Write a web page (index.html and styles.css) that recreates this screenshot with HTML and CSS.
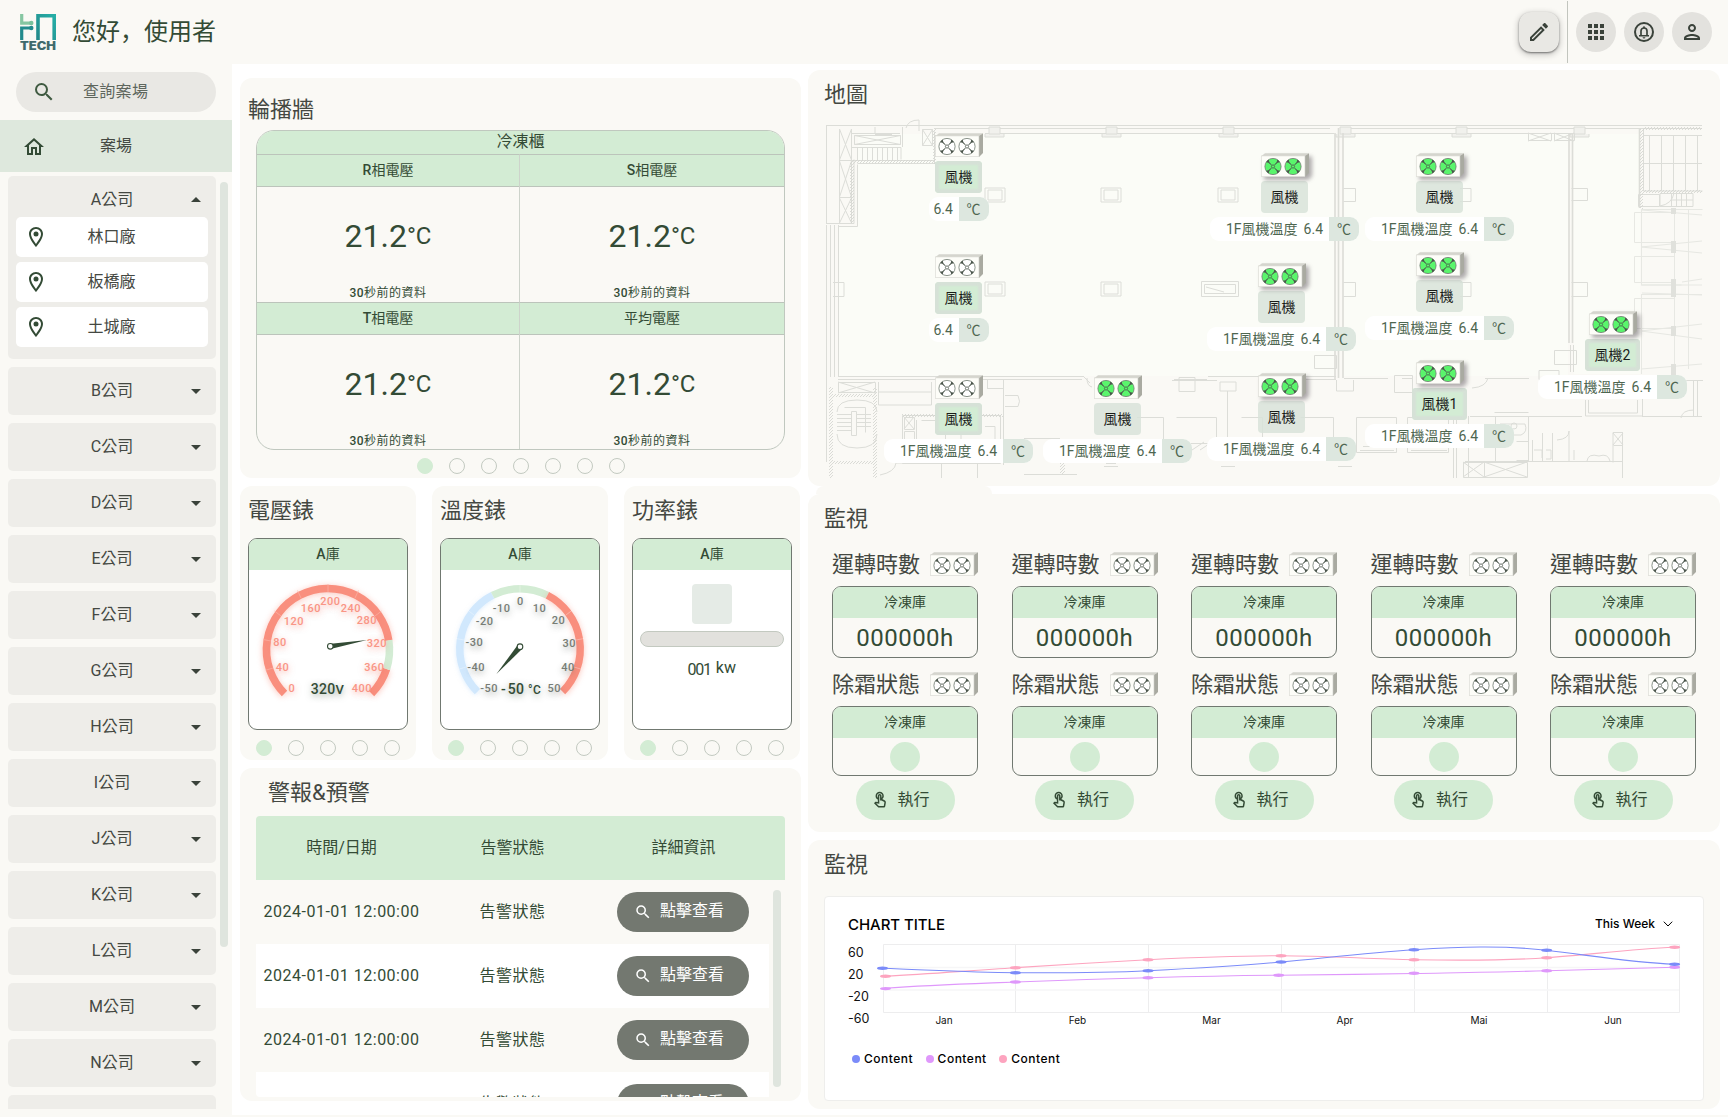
FILE: index.html
```html
<!DOCTYPE html>
<html lang="zh-Hant">
<head>
<meta charset="utf-8">
<title>TECH</title>
<link rel="stylesheet" href="styles.css">
</head>
<body>
<svg class="defs" aria-hidden="true">
  <symbol id="i-search" viewBox="0 0 24 24"><path d="M15.5 14h-.79l-.28-.27A6.471 6.471 0 0 0 16 9.5 6.5 6.5 0 1 0 9.5 16c1.61 0 3.09-.59 4.23-1.57l.27.28v.79l5 4.99L20.49 19l-4.99-5zm-6 0C7.01 14 5 11.99 5 9.5S7.01 5 9.5 5 14 7.01 14 9.5 11.99 14 9.5 14z"/></symbol>
  <symbol id="i-home" viewBox="0 0 24 24"><path d="M12 5.69l5 4.5V18h-2v-6H9v6H7v-7.81l5-4.5M12 3L2 12h3v8h6v-6h2v6h6v-8h3L12 3z"/></symbol>
  <symbol id="i-pin" viewBox="0 0 24 24"><path d="M12 2C8.13 2 5 5.13 5 9c0 5.25 7 13 7 13s7-7.75 7-13c0-3.87-3.13-7-7-7zM7 9c0-2.76 2.24-5 5-5s5 2.24 5 5c0 2.88-2.88 7.19-5 9.88C9.92 16.21 7 11.85 7 9z"/><circle cx="12" cy="9" r="2.5"/></symbol>
  <symbol id="i-down" viewBox="0 0 24 24"><path d="M7 10l5 5 5-5z"/></symbol>
  <symbol id="i-up" viewBox="0 0 24 24"><path d="M7 14l5-5 5 5z"/></symbol>
  <symbol id="i-edit" viewBox="0 0 24 24"><path d="M14.06 9.02l.92.92L5.92 19H5v-.92l9.06-9.06M17.66 3c-.25 0-.51.1-.7.29l-1.83 1.83 3.75 3.75 1.83-1.83c.39-.39.39-1.02 0-1.41l-2.34-2.34c-.2-.2-.45-.29-.71-.29zm-3.6 3.19L3 17.25V21h3.75L17.81 9.94l-3.75-3.75z"/></symbol>
  <symbol id="i-apps" viewBox="0 0 24 24"><path d="M4 8h4V4H4v4zm6 12h4v-4h-4v4zm-6 0h4v-4H4v4zm0-6h4v-4H4v4zm6 0h4v-4h-4v4zm6-10v4h4V4h-4zm-6 4h4V4h-4v4zm6 6h4v-4h-4v4zm0 6h4v-4h-4v4z"/></symbol>
  <symbol id="i-bell" viewBox="0 0 24 24"><circle cx="12" cy="12" r="9" fill="none" stroke="currentColor" stroke-width="2"/><path d="M7 15h10v1.400H7zM10.600 17.200h2.800a1.400 1.400 0 0 1-2.800 0z"/><path d="M9 15.500V11a3 3 0 0 1 6 0v4.500" fill="none" stroke="currentColor" stroke-width="1.700"/><circle cx="12" cy="7.300" r="1"/></symbol>
  <symbol id="i-person" viewBox="0 0 24 24"><path d="M12 6c1.100 0 2 .9 2 2s-.9 2-2 2-2-.9-2-2 .9-2 2-2m0 10c2.700 0 5.800 1.290 6 2H6c.23-.72 3.310-2 6-2m0-12C9.790 4 8 5.790 8 8s1.790 4 4 4 4-1.790 4-4-1.790-4-4-4zm0 10c-2.670 0-8 1.340-8 4v2h16v-2c0-2.660-5.330-4-8-4z"/></symbol>
  <symbol id="i-touch" viewBox="0 0 24 24"><path d="M18.190 12.440l-3.240-1.620c1.290-1 2.120-2.560 2.120-4.320 0-3.030-2.470-5.500-5.500-5.500s-5.500 2.470-5.500 5.500c0 2.130 1.220 3.980 3 4.890v3.260c-2.150-.46-2.020-.44-2.260-.44-.53 0-1.030.21-1.410.59L4 16.220l5.090 5.090c.43.44 1.030.69 1.650.69h6.300c.98 0 1.810-.7 1.970-1.670l.8-4.710c.22-1.300-.43-2.580-1.620-3.180zm-.35 2.850l-.8 4.710h-6.300c-.09 0-.17-.04-.24-.1l-3.680-3.680 4.250.89V6.500c0-.28.22-.5.5-.5s.5.22.5.5v6h1.760l3.460 1.730c.4.2.62.63.55 1.060zM8.070 6.500c0-1.930 1.570-3.500 3.500-3.500s3.500 1.570 3.500 3.500c0 .95-.38 1.810-1 2.440V6.500c0-1.380-1.120-2.500-2.500-2.500s-2.500 1.120-2.500 2.500v2.440c-.62-.63-1-1.490-1-2.440z"/></symbol>
  <symbol id="blades" viewBox="-9 -9 18 18">
    <circle r="8.100" stroke="#6f7a70" stroke-width=".8"/>
    <g fill="#4b564c"><path id="blade" d="M-6.900-4.300A8.100 8.100 0 0 1-4.300-6.900L-3.700-4.600-1.300-1.700-1.700-1.300-4.600-3.700z"/><use href="#blade" transform="rotate(90)"/><use href="#blade" transform="rotate(180)"/><use href="#blade" transform="rotate(270)"/></g>
    <circle r="1.600" stroke="#4a544a" stroke-width=".8"/>
  </symbol>
  <symbol id="fan" viewBox="0 0 48 24">
    <path d="M.5 3L4 .3h44L44 3z" fill="#d5d5ce"/><path d="M44 3l4-2.700V20l-4 4z" fill="#a9aaa1"/>
    <path d="M.3 2.800H44V23.700H.3z" fill="#fdfdf8" stroke="#cfcfc8" stroke-width=".6"/>
    <use href="#blades" x="3" y="4.500" width="18" height="18"/><use href="#blades" x="23" y="4.500" width="18" height="18"/>
  </symbol>
</svg>

<header class="topbar">
  <svg class="logo" viewBox="0 0 36 36">
    <defs><linearGradient id="lg" x1="0" x2="1" y1="1" y2="0"><stop offset="0" stop-color="#22898a"/><stop offset="1" stop-color="#25aea6"/></linearGradient></defs>
    <path d="M1.700 0v9.200H11" fill="none" stroke="#86c6a2" stroke-width="3.200"/><circle cx="11.300" cy="9" r="2.200" fill="#78c19c"/>
    <path d="M1.700 26V14H11" fill="none" stroke="#238b8d" stroke-width="3.200"/><circle cx="11.300" cy="14" r="2.200" fill="#238b8d"/>
    <path d="M18 26V1.800h16.200V26" fill="none" stroke="url(#lg)" stroke-width="3.600"/>
    <text x="0" y="36" textLength="36" lengthAdjust="spacingAndGlyphs" class="logo-text">TECH</text>
  </svg>
  <h1 lang="zh-Hans">您好，使用者</h1>
  <div class="actions">
    <button class="act edit"><svg><use href="#i-edit"/></svg></button>
    <i class="sep"></i>
    <button class="act"><svg><use href="#i-apps"/></svg></button>
    <button class="act"><svg><use href="#i-bell"/></svg></button>
    <button class="act"><svg><use href="#i-person"/></svg></button>
  </div>
</header>

<div class="body">
<aside class="side">
  <div class="search"><svg><use href="#i-search"/></svg><span>查詢案場</span></div>
  <div class="nav"><svg><use href="#i-home"/></svg><span>案場</span></div>
  <div class="side-scroll">
    <div class="companies">
      <section class="co open">
        <div class="co-head"><span>A公司</span><svg><use href="#i-up"/></svg></div>
        <div class="site"><svg><use href="#i-pin"/></svg><span>林口廠</span></div>
        <div class="site"><svg><use href="#i-pin"/></svg><span>板橋廠</span></div>
        <div class="site"><svg><use href="#i-pin"/></svg><span>土城廠</span></div>
      </section>
      <section class="co"><span>B公司</span><svg><use href="#i-down"/></svg></section>
      <section class="co"><span>C公司</span><svg><use href="#i-down"/></svg></section>
      <section class="co"><span>D公司</span><svg><use href="#i-down"/></svg></section>
      <section class="co"><span>E公司</span><svg><use href="#i-down"/></svg></section>
      <section class="co"><span>F公司</span><svg><use href="#i-down"/></svg></section>
      <section class="co"><span>G公司</span><svg><use href="#i-down"/></svg></section>
      <section class="co"><span>H公司</span><svg><use href="#i-down"/></svg></section>
      <section class="co"><span>I公司</span><svg><use href="#i-down"/></svg></section>
      <section class="co"><span>J公司</span><svg><use href="#i-down"/></svg></section>
      <section class="co"><span>K公司</span><svg><use href="#i-down"/></svg></section>
      <section class="co"><span>L公司</span><svg><use href="#i-down"/></svg></section>
      <section class="co"><span>M公司</span><svg><use href="#i-down"/></svg></section>
      <section class="co"><span>N公司</span><svg><use href="#i-down"/></svg></section>
      <section class="co"></section>
    </div>
    <i class="side-bar"></i>
  </div>
</aside>

<main class="main">
<div class="col-left">
  <section class="card wall">
    <h2>輪播牆</h2>
    <div class="wall-table">
      <div class="wall-cap">冷凍櫃</div>
      <div class="wall-grid">
        <div class="cell"><h3><b>R</b>相電壓</h3><p class="val">21.2<sup>°C</sup></p><small><b>30</b>秒前的資料</small></div>
        <div class="cell"><h3><b>S</b>相電壓</h3><p class="val">21.2<sup>°C</sup></p><small><b>30</b>秒前的資料</small></div>
        <div class="cell"><h3><b>T</b>相電壓</h3><p class="val">21.2<sup>°C</sup></p><small><b>30</b>秒前的資料</small></div>
        <div class="cell"><h3>平均電壓</h3><p class="val">21.2<sup>°C</sup></p><small><b>30</b>秒前的資料</small></div>
      </div>
    </div>
    <div class="dots"><i class="on"></i><i></i><i></i><i></i><i></i><i></i><i></i></div>
  </section>

  <div class="meters">
    <section class="card meter">
      <h2>電壓錶</h2>
      <div class="panel"><h3><b>A</b>庫</h3>
        <svg class="gauge" viewBox="249 571 158 158">
          <g fill="none" stroke-width="7.600">
            <path class="glow-red" stroke="#f98f7e" d="M284.500 694.500A61.500 61.500 0 1 1 388.700 641.400M386.500 670A61.500 61.500 0 0 1 371.500 694.500"/>
            <path stroke="#d3ecd4" d="M388.700 641.400A61.500 61.500 0 0 1 386.500 670"/>
            <path stroke="#fbb3a6" stroke-width=".7" d="M273 669l-7.500 2.300M271 642l-8-1.500M281 617l-6.500-5M301 599l-3.500-7.500M328 593v-8M355 599l3.500-7.500M375 617l6.500-5"/>
          </g>
          <g class="lbl red"><text x="292" y="692.500">0</text><text x="282.500" y="671.500">40</text><text x="280" y="646.500">80</text><text x="294" y="625.500">120</text><text x="311" y="612.500">160</text><text x="330.500" y="605.500">200</text><text x="350.800" y="612.500">240</text><text x="366.800" y="624.500">280</text><text x="376.800" y="647.500">320</text><text x="374.500" y="671.500">360</text><text x="362" y="692.500">400</text></g>
          <text class="read" x="327.500" y="694.500">320<tspan font-size="13">V</tspan></text>
          <path fill="#334b35" d="M331 644.800L367 641 331.500 649.800z"/><circle cx="330.300" cy="647.300" r="2.800" fill="#fff" stroke="#334b35" stroke-width="1.100"/>
        </svg>
      </div>
      <div class="dots"><i class="on"></i><i></i><i></i><i></i><i></i></div>
    </section>
    <section class="card meter">
      <h2>溫度錶</h2>
      <div class="panel"><h3><b>A</b>庫</h3>
        <svg class="gauge" viewBox="441 571 158 158">
          <g fill="none" stroke-width="7.400">
            <path stroke="#d1e8fd" class="glow-blue" d="M477.400 692.600A60.300 60.300 0 0 1 492.600 596.300"/>
            <path stroke="#d3ecd4" d="M492.600 596.300A60.300 60.300 0 0 1 547.400 596.300"/>
            <path stroke="#f98f7e" class="glow-red" d="M547.400 596.300A60.300 60.300 0 0 1 562.600 692.600"/>
            <path stroke="#fff" stroke-opacity=".45" stroke-width=".7" d="M466 668l-7.500 2.300M464 641l-8-1.500M474 616l-6.500-5M520 593v-8M566 616l6.500-5M576 641l8-1.500M574 668l7.500 2.300"/>
          </g>
          <g class="lbl"><text x="489.200" y="692.500">-50</text><text x="476.200" y="671.500">-40</text><text x="474.400" y="646.500">-30</text><text x="484.700" y="625.500">-20</text><text x="501.700" y="612.500">-10</text><text x="520.300" y="605.500">0</text><text x="539.500" y="612.500">10</text><text x="558.400" y="624.500">20</text><text x="569.200" y="647.500">30</text><text x="568" y="671.500">40</text><text x="554.300" y="692.500">50</text></g>
          <text class="read" x="521" y="694.500">-&#8202;50 <tspan font-size="12">°C</tspan></text>
          <path fill="#334b35" d="M517.300 646.500L496.400 675 521.500 650.500z"/><circle cx="520" cy="647.700" r="2.800" fill="#fff" stroke="#334b35" stroke-width="1.100"/>
        </svg>
      </div>
      <div class="dots"><i class="on"></i><i></i><i></i><i></i><i></i></div>
    </section>
    <section class="card meter">
      <h2>功率錶</h2>
      <div class="panel"><h3><b>A</b>庫</h3>
        <div class="power"><i class="sq"></i><i class="bar"></i><p><b>001</b><span>kw</span></p></div>
      </div>
      <div class="dots"><i class="on"></i><i></i><i></i><i></i><i></i></div>
    </section>
  </div>

  <section class="card alerts">
    <h2>警報&amp;預警</h2>
    <div class="thead"><span>時間/日期</span><span>告警狀態</span><span>詳細資訊</span></div>
    <div class="tscroll">
      <div class="rows">
        <div class="row"><span>2024-01-01 12:00:00</span><span>告警狀態</span><span><button class="view"><svg><use href="#i-search"/></svg>點擊查看</button></span></div>
        <div class="row"><span>2024-01-01 12:00:00</span><span>告警狀態</span><span><button class="view"><svg><use href="#i-search"/></svg>點擊查看</button></span></div>
        <div class="row"><span>2024-01-01 12:00:00</span><span>告警狀態</span><span><button class="view"><svg><use href="#i-search"/></svg>點擊查看</button></span></div>
        <div class="row"><span>2024-01-01 12:00:00</span><span>告警狀態</span><span><button class="view"><svg><use href="#i-search"/></svg>點擊查看</button></span></div>
      </div>
      <i class="tbar"></i>
    </div>
  </section>
</div>

<div class="col-right">
  <section class="card map">
    <h2>地圖</h2>
    <svg class="plan" viewBox="824 118 880 360" stroke="#dcddd8" stroke-width="1">
      <defs>
        <g id="post"><path d="M0 0h20v14H0zM3 2h14v10H3z"/></g>
        <g id="tpost"><path d="M4 0h11v7H4zM0 7v3h19V7" fill="#f1f1ed"/></g>
        <pattern id="hatch" width="3" height="3" patternUnits="userSpaceOnUse"><path d="M0 3L3 0" stroke="#d2d3ce" stroke-width=".8"/></pattern>
      </defs>
      <path d="M858 164V134h476v242H839V226h19zM1344 134h224v242h-224zM1574 134h66v240h-66z" fill="#fbfcf7" stroke="none"/>
      <path d="M826 125.500h876M934 128.500h396M1344 128.500h358M985 133.500h349M1344 133.500h225M826.500 126v97M826 223.500h28M857.500 164.500v62H838.500M857.500 163.500h77v-32M854 159.500v64M851.500 160.500h83"/>
      <path d="M875 127v6M875 134.500h17M900 133.500h-49M839.500 129v94M851.500 129v94M839.500 160.500h12M839.500 197.500h12M839.500 129l12 31M851.500 129l-12 31M839.500 161l12 36M851.500 161l-12 36M839.500 198l12 25M851.500 198l-12 25M854.500 135.500h46v9h-46zM854.500 135.500l46 9M900.500 135.500l-46 9M852 147.500h49v12M857.500 148v12M862.500 148v12M867.500 148v12M872.500 148v12M877.500 148v12M882.500 148v12M887.500 148v12M892.500 148v12M897.500 148v12M902.500 127v20M906 128q2-8 13-8v11M922.500 129.500h10v16h-10zM922.500 129.500l10 16M932.500 129.500l-10 16"/>
      <path d="M851 160h83v3h-83zM850 163h4v60h-4zM933 129h3v35h-3z" fill="url(#hatch)" stroke="none"/>
      <path d="M826.500 225v237M830.500 225v152M834.500 225v152M838.500 225v152M833 282.500h11v14h-11M838 376.500h246M838 379.500h244M1174 379.500h33M1208 376.500h128M1296 379.500h40M1344 378.500h44M1402 378.500h10M1485 378.500h44"/>
      <use href="#post" x="985" y="188"/><use href="#post" x="1101" y="188"/><use href="#post" x="1218" y="188"/><use href="#post" x="985" y="282"/><use href="#post" x="1101" y="282"/><path d="M1201.500 281.500h37v15h-37zM1204.500 284.500h31v9h-31zM1206 287l18 5"/>
      <use href="#tpost" x="985" y="127"/><use href="#tpost" x="1102" y="127"/><use href="#tpost" x="1219" y="127"/><use href="#tpost" x="1336" y="127"/><use href="#tpost" x="1452" y="127"/><use href="#tpost" x="1570" y="127"/>
      <g stroke-width="1.600"><path d="M1335 133v247M1338.500 128v250M1343 133v245M1569 133v210M1572.500 133v210M1639.500 128v80"/></g>
      <path d="M1343.500 188.500h12v13h-12M1343.500 282.500h12v14h-12M1571.500 188.500h16v12h-16M1571.500 282.500h16v14h-16M1460 188.500h11v13h-11M1460 282.500h11v14h-11M1528.500 133.500h23v7h-23zM1554.500 133.500h20v7h-20zM1528 133l23 8M1551 133l-23 8M1554 133l20 8M1574 133l-20 8"/>
      <path d="M1643.500 129v62h59M1643 135.500h59M1643 163.500h59M1649.500 135v56M1661.500 135v56M1673.500 135v56M1685.500 135v56M1697.500 135v56M1638.500 194.500h21v12h-21zM1660 193.500h33v13h-33zM1671.500 193v13M1676.500 193v13M1681.500 193v13M1686.500 193v13M1671 200h22M1660 206q12-2 14-13"/>
      <path d="M1640 129h3v80h-3zM1643 190h59v3h-59zM1643 127h59v3h-59z" fill="url(#hatch)" stroke="none"/>
      <g stroke="#e7e8e3"><path d="M1641.500 209.500h61M1641.500 209v76h40M1702 215l-60-5M1641 247l61-6M1641 247l61 6M1641 285h61M1702 279l-20 3M1641 294.500h61M1641.500 294v80M1641 331l61-7M1641 331l61 8M1702 364l-61 5M1702 295l-60-2M1674.500 209v170M1688.500 209v160M1634.500 212.500h40v30h-40zM1634.500 256.500h40v26h-40zM1634.500 298.500h40v30h-40z"/></g>
      <path d="M1671 208h5v6h-5zM1671 241h5v12h-5zM1671 279h5v18h-5zM1671 326h5v10h-5zM1671 364h5v12h-5z" fill="#e0e1dc" stroke="none"/>
      <path d="M1570.500 345v27M1573.500 345v27M1585 380.500h118M1693.500 380v36M1697.500 380v36M1681 418q1-8 13-8M1642 416.500h60M1585.500 400v16h57v-37M1588.500 400v13h49v-13M1470 416.500h112M1468.500 416v62"/>
      <path d="M829 387h4v91h-4zM873 387h4v91h-4zM829 394h48v3h-48zM829 461h48v3h-48z" fill="url(#hatch)" stroke="none"/>
      <path d="M838.500 382.500h37v10h-37zM838 382l37 11M875 382l-37 11M878.500 382v23h53v-23M878 392h54M837 412q0-12 20-12t20 12M837 434q0 14 20 14t20-14M844.500 407.500h21v25M851.500 411.500h5v24h-5zM837 414.500h15M837 418.500h15M837 422.500h15M837 426.500h15M837 430.500h15M857 414.500h14M857 418.500h14M857 422.500h14M857 426.500h14M880 475q15-3 16-12h43M941.500 464v14M977.500 464v14M987 388.500h16M1003.500 380v85M987.500 380v9M902.500 415.500h98v48h-98zM904.500 417.500h10v12h-10zM904.500 431.500h10v12h-10zM904 417l10 12M914 417l-10 12M916.500 420v40M921.500 420.500h24v36M985 426.500h10v17h-10M949 434.500h12v8h-12"/>
      <path d="M902 414h101v3h-101zM1060 440h5v35h-5z" fill="url(#hatch)" stroke="none"/>
      <path d="M1084 377l6 6M1087 378q0 8 5 9M1005 395.500h13q3 6 0 11h-13M1179 377.500h16v14h-16zM1172 380.500h45M1220 382h16v9h-16zM1227.500 391v52M1137 417.500h26.500v24M1176.500 417.500h40v26M1241.500 417.500h21v24h-21M1123.500 440v20M1176 443.500h40M1192 450l12-8M1200 450l12-8M1024 438.500h36M1024 474.500h53M1104 466.500h14M1106 463.500h10M1221 466.500h14M1338 466.500h14M1300.500 417.500h33v35M1356.500 417.500h40v35h-40zM1407.500 417.500h41v35h-41zM1363 446.500h28M1360 450.500h34M1411 450.500h36M1314.500 355.500h22v13h-22zM1394.500 375.500h18v17h-18zM1554.500 350.500h22v14h-22zM1539 370.500h20v9h-20zM1472 388q14-1 16-10M1336.500 380v11h17v-11"/>
      <path d="M1453.500 418v60M1456.500 418v60M1465 461.500h158M1622.500 432v46M1623 432.500h-10v30M1613.500 445.500h9M1613 433l10 12M1623 433l-10 12M1495.500 416v46M1528.500 416v46M1532.500 440v22M1463.500 462.500h64v15h-64zM1463 462l21 15M1484 462l-21 15M1484 462l43 15M1527 462l-43 15M1484.500 462v15M1494.500 412.500h34M1500 424h25q3 8-4 11h-16q-7-4-5-11zM1516.500 441.500h12v19h-12M1534 450h8v8M1542.500 433v28M1552.500 433v28M1546 450h5v9h-5M1557 440q12-1 12-9v30M1574 450v10M1587 461q1-8 12-5 9-3 11 5"/>
      <circle cx="1514" cy="426" r="3"/>
    </svg>

    <div class="unit off" style="left:150.5px;top:63px"><svg><use href="#fan"/></svg><b class="hl">風機</b><p class="short"><span>6.4</span><em>℃</em></p></div>
    <div class="unit off" style="left:150.5px;top:184px"><svg><use href="#fan"/></svg><b class="hl">風機</b><p class="short"><span>6.4</span><em>℃</em></p></div>
    <div class="unit off" style="left:150.5px;top:305px"><svg><use href="#fan"/></svg><b class="hl">風機</b><p><span>1F風機溫度<i></i>6.4</span><em>℃</em></p></div>
    <div class="unit on" style="left:309.5px;top:305px"><svg><use href="#fan"/></svg><b>風機</b><p><span>1F風機溫度<i></i>6.4</span><em>℃</em></p></div>
    <div class="unit on sh" style="left:476.5px;top:83px"><svg><use href="#fan"/></svg><b>風機</b><p><span>1F風機溫度<i></i>6.4</span><em>℃</em></p></div>
    <div class="unit on sh" style="left:473.5px;top:193px"><svg><use href="#fan"/></svg><b>風機</b><p><span>1F風機溫度<i></i>6.4</span><em>℃</em></p></div>
    <div class="unit on sh" style="left:473.5px;top:303px"><svg><use href="#fan"/></svg><b>風機</b><p><span>1F風機溫度<i></i>6.4</span><em>℃</em></p></div>
    <div class="unit on sh" style="left:631.5px;top:83px"><svg><use href="#fan"/></svg><b>風機</b><p><span>1F風機溫度<i></i>6.4</span><em>℃</em></p></div>
    <div class="unit on sh" style="left:631.5px;top:182px"><svg><use href="#fan"/></svg><b>風機</b><p><span>1F風機溫度<i></i>6.4</span><em>℃</em></p></div>
    <div class="unit on sh" style="left:631.5px;top:290px"><svg><use href="#fan"/></svg><b class="hl">風機1</b><p><span>1F風機溫度<i></i>6.4</span><em>℃</em></p></div>
    <div class="unit on sh" style="left:804.5px;top:241px"><svg><use href="#fan"/></svg><b class="hl">風機2</b><p><span>1F風機溫度<i></i>6.4</span><em>℃</em></p></div>
  </section>

  <div class="tab"></div>
  <section class="card monitor">
    <h2>監視</h2>
    <div class="mons">
      <div class="mon"><div class="mh"><h2>運轉時數</h2><svg><use href="#fan"/></svg></div><div class="box b1"><h3>冷凍庫</h3><p>000000h</p></div><div class="mh m2"><h2>除霜狀態</h2><svg><use href="#fan"/></svg></div><div class="box b2"><h3>冷凍庫</h3><i></i></div><button class="run"><svg><use href="#i-touch"/></svg>執行</button></div>
      <div class="mon"><div class="mh"><h2>運轉時數</h2><svg><use href="#fan"/></svg></div><div class="box b1"><h3>冷凍庫</h3><p>000000h</p></div><div class="mh m2"><h2>除霜狀態</h2><svg><use href="#fan"/></svg></div><div class="box b2"><h3>冷凍庫</h3><i></i></div><button class="run"><svg><use href="#i-touch"/></svg>執行</button></div>
      <div class="mon"><div class="mh"><h2>運轉時數</h2><svg><use href="#fan"/></svg></div><div class="box b1"><h3>冷凍庫</h3><p>000000h</p></div><div class="mh m2"><h2>除霜狀態</h2><svg><use href="#fan"/></svg></div><div class="box b2"><h3>冷凍庫</h3><i></i></div><button class="run"><svg><use href="#i-touch"/></svg>執行</button></div>
      <div class="mon"><div class="mh"><h2>運轉時數</h2><svg><use href="#fan"/></svg></div><div class="box b1"><h3>冷凍庫</h3><p>000000h</p></div><div class="mh m2"><h2>除霜狀態</h2><svg><use href="#fan"/></svg></div><div class="box b2"><h3>冷凍庫</h3><i></i></div><button class="run"><svg><use href="#i-touch"/></svg>執行</button></div>
      <div class="mon"><div class="mh"><h2>運轉時數</h2><svg><use href="#fan"/></svg></div><div class="box b1"><h3>冷凍庫</h3><p>000000h</p></div><div class="mh m2"><h2>除霜狀態</h2><svg><use href="#fan"/></svg></div><div class="box b2"><h3>冷凍庫</h3><i></i></div><button class="run"><svg><use href="#i-touch"/></svg>執行</button></div>
    </div>
  </section>

  <section class="card trend">
    <h2>監視</h2>
    <div class="chart">
      <div class="chart-head"><h3>CHART TITLE</h3><span>This Week<svg viewBox="0 0 10 6"><path d="M.8.7L5 5 9.200.7" fill="none" stroke="#000"/></svg></span></div>
      <svg class="plot" viewBox="825 938 878 92">
        <g fill="none" stroke="#ededee"><path d="M883.500 944.500h796v68h-796zM1015.500 944v68M1148.500 944v68M1281.500 944v68M1414.500 944v68M1547.500 944v68"/><path stroke="#f6f6f7" stroke-width="1.500" d="M883 967.500h796M883 990h796"/></g>
        <g class="yl"><text x="848" y="956.500">60</text><text x="848" y="978.500">20</text><text x="848" y="1000.500">-20</text><text x="848" y="1022.500">-60</text></g>
        <g class="xl"><text x="944" y="1023.500">Jan</text><text x="1077.500" y="1023.500">Feb</text><text x="1211.500" y="1023.500">Mar</text><text x="1345" y="1023.500">Apr</text><text x="1479" y="1023.500">Mai</text><text x="1613" y="1023.500">Jun</text></g>
        <g fill="none" stroke-width="1.100">
          <path stroke="#fda4bf" d="M885 976.300C930 974 970 970.500 1015.400 967.700S1103 962 1148 959.700 1236 955.700 1281 955.700 1370 959 1414 959.700 1502 960.800 1546.700 957.700 1630 949 1674.600 947.300"/>
          <path stroke="#df98fb" d="M885 988.300C930 985 970 983.800 1015.400 982S1103 978.900 1148 977.700 1236 975.600 1279 975.200 1370 974.300 1414 973.500 1502 972.200 1546.700 970.700 1630 968.800 1674.600 967.300"/>
          <path stroke="#7b8bf9" d="M882.300 968.300C930 970 970 972.500 1015.400 972.700S1103 973 1148 970.700 1236 966.200 1281 962 1370 952.500 1414 949.700 1502 945 1546.700 950.300 1630 962.500 1674.600 964.300"/>
        </g>
        <g fill="#fda4bf"><ellipse cx="885.500" cy="976.300" rx="5.500" ry="1.700"/><ellipse cx="1015.400" cy="967.700" rx="5.500" ry="1.700"/><ellipse cx="1148" cy="959.700" rx="5.500" ry="1.700"/><ellipse cx="1281" cy="955.700" rx="5.500" ry="1.700"/><ellipse cx="1414" cy="959.700" rx="5.500" ry="1.700"/><ellipse cx="1546.700" cy="957.700" rx="5.500" ry="1.700"/><ellipse cx="1674.600" cy="947.300" rx="5.500" ry="1.700"/></g>
        <g fill="#df98fb"><ellipse cx="885.500" cy="988.600" rx="5.500" ry="1.700"/><ellipse cx="1015.400" cy="982" rx="5.500" ry="1.700"/><ellipse cx="1148" cy="977.700" rx="5.500" ry="1.700"/><ellipse cx="1278.700" cy="975.300" rx="5.500" ry="1.700"/><ellipse cx="1414" cy="973.300" rx="5.500" ry="1.700"/><ellipse cx="1546.700" cy="970.700" rx="5.500" ry="1.700"/><ellipse cx="1674.600" cy="967.300" rx="5.500" ry="1.700"/></g>
        <g fill="#7b8bf9"><ellipse cx="882.500" cy="968.300" rx="5.500" ry="1.700"/><ellipse cx="1015.400" cy="972.700" rx="5.500" ry="1.700"/><ellipse cx="1148" cy="970.700" rx="5.500" ry="1.700"/><ellipse cx="1281" cy="962" rx="5.500" ry="1.700"/><ellipse cx="1414" cy="949.700" rx="5.500" ry="1.700"/><ellipse cx="1546.700" cy="950.300" rx="5.500" ry="1.700"/><ellipse cx="1674.600" cy="964.300" rx="5.500" ry="1.700"/></g>
      </svg>
      <div class="legend"><span class="k1">Content</span><span class="k2">Content</span><span class="k3">Content</span></div>
    </div>
  </section>
</div>
</main>
</div>
</body>
</html>
```
FILE: styles.css
```css
* { box-sizing: border-box; margin: 0; padding: 0; }
body {
  width: 1728px; height: 1117px; overflow: hidden;
  background: #faf9f5; color: #444842;
  font-family: Roboto, "Noto Sans CJK TC", sans-serif;
  font-size: 16px; line-height: 24px;
}
.defs { position: absolute; width: 0; height: 0; }
svg { display: block; fill: currentColor; flex: none; }
i, em { font-style: normal; display: block; }
b { font-weight: 500; }
button { border: 0; font: inherit; color: inherit; }
h2 { font-size: 22px; line-height: 28px; font-weight: 400; position: relative; top: 1px; }
h3 { font-size: 14px; line-height: 20px; font-weight: 400; color: #334b35; text-align: center; }

.topbar { height: 64px; padding: 0 16px 0 20px; display: flex; align-items: center; }
.logo { width: 36px; height: 36px; overflow: visible; }
.logo-text { font: 900 11.4px Inter, sans-serif; fill: #3f6a6c; }
.topbar h1 { margin: -5px 0 0 16px; font-size: 24px; line-height: 32px; font-weight: 400; color: #334b35; font-family: "Noto Sans CJK SC", sans-serif; }
.actions { margin-left: auto; height: 64px; display: flex; align-items: center; gap: 8px; color: #3a423a; }
.act { width: 40px; height: 40px; border-radius: 20px; background: #e3e2de; display: grid; place-items: center; }
.act svg { width: 24px; height: 24px; }
.edit { border-radius: 12px; background: #e9e8e4; box-shadow: 0 1px 2px rgba(0,0,0,.45), 0 2px 6px 1px rgba(0,0,0,.2); }
.sep { width: 1px; height: 62px; background: #c2c5be; }

.body { display: flex; height: 1051px; }
.side { width: 232px; flex: none; padding-top: 8px; }
.search { margin: 0 16px; width: 200px; height: 40px; border-radius: 20px; background: #e9e8e4; display: flex; align-items: center; color: #5e665d; }
.search svg { width: 24px; height: 24px; margin-left: 16px; color: #3f5a41; }
.search span { margin: -1px 0 0 27px; letter-spacing: .3px; }
.nav { margin-top: 8px; height: 52px; background: #dee8dd; display: flex; align-items: center; }
.nav svg { width: 24px; height: 24px; margin: 1px 0 0 21.5px; color: #334b35; }
.nav span { margin: -1px 0 0 54.5px; }
.side-scroll { margin-top: 4px; height: 933px; display: flex; overflow: hidden; }
.companies { width: 208px; margin-left: 8px; display: flex; flex-direction: column; gap: 8px; }
.co { flex: none; height: 48px; border-radius: 5px; background: #eeede9; display: flex; align-items: center; }
.co > span, .co-head span { flex: 1; text-align: center; margin-top: -1px; }
.co > svg, .co-head svg { width: 24px; height: 24px; margin: 0 8px 0 -32px; color: #3a423a; }
.co.open { height: 183px; display: block; padding: 11px 8px 0; }
.co-head { height: 25px; margin: 0 -8px 5px; display: flex; align-items: center; }
.co-head span { margin-top: 1px; }
.site { height: 40px; margin-bottom: 5px; border-radius: 5px; background: #fff; display: flex; align-items: center; }
.site svg { width: 24px; height: 24px; margin-left: 8px; color: #334b35; }
.site span { margin: -1px 0 0 39.5px; }
.side-bar { width: 8px; height: 765px; border-radius: 4px; background: #dfe5de; margin: 6px 0 0 4px; }

.main { flex: 1; background: #fff; padding: 6px 8px 0 8px; display: flex; gap: 7px; }
.card { background: #faf9f5; border-radius: 12px; }
.col-left { width: 561px; padding-top: 8px; display: flex; flex-direction: column; gap: 8px; }
.wall { height: 400px; padding: 17px 16px 0; }
.wall h2 { margin-left: -8px; }
.wall-table { margin-top: 7px; height: 320px; border: 1px solid #c0c8bf; border-radius: 18px; overflow: hidden; }
.wall-cap { height: 23px; background: #d3ecd4; text-align: center; line-height: 22px; color: #334b35; }
.wall-grid { display: grid; grid-template-columns: 263px 1fr; }
.cell { height: 148px; border-top: 1px solid #bcc4bb; }
.cell:nth-child(odd) { border-right: 1px solid #cdd3cb; }
.cell h3 { height: 32px; line-height: 31px; background: #d3ecd4; border-bottom: 1px solid #bcc4bb; }
.val { margin-top: 29px; text-align: center; font-size: 32px; line-height: 40px; color: #334b35; }
.val sup { font-size: 24px; line-height: 24px; vertical-align: 3px; }
.cell small { display: block; margin-top: 29px; text-align: center; font-size: 12px; line-height: 16px; letter-spacing: .5px; color: #334b35; }
.dots { display: flex; justify-content: center; gap: 16px; margin-top: 8px; }
.dots i { width: 16px; height: 16px; border-radius: 8px; border: 1px solid #c3cac1; }
.dots .on { background: #d3ecd4; border-color: #d3ecd4; }

.meters { display: flex; gap: 16px; }
.meter { width: 176px; height: 274px; padding: 10px 8px 0; }
.panel { margin-top: 14px; height: 192px; border: 1px solid #707870; border-radius: 9px; background: #fff; overflow: hidden; }
.panel h3 { height: 31px; line-height: 31px; background: #d3ecd4; }
.gauge { width: 158px; height: 158px; }
.gauge text { text-anchor: middle; }
.lbl text { font-size: 11px; font-weight: 500; letter-spacing: .5px; fill: #777d76; text-shadow: 0 3px 6px rgba(60,70,60,.4); }
.lbl.red text { fill: #f99585; text-shadow: 0 2px 6px rgba(249,100,80,.5); }
.read { font-size: 14px; font-weight: 500; fill: #334b35; letter-spacing: .3px; text-shadow: 0 2px 6px rgba(50,75,53,.5); }
.glow-red { filter: drop-shadow(0 1px 3px rgba(249,130,110,.45)); }
.glow-blue { filter: drop-shadow(0 1px 2px rgba(190,220,250,.5)); }
.meter .dots { margin-top: 10px; }
.power { display: flex; flex-direction: column; align-items: center; padding-top: 14px; color: #334b35; }
.sq { width: 40px; height: 40px; border-radius: 4px; background: #e5ebe6; }
.bar { width: 144px; height: 16px; margin-top: 7px; border-radius: 8px; background: #e2e1dd; border: 1px solid #c3c9c0; }
.power p { display: flex; margin-top: 9px; gap: 5px; }
.power b { font-weight: 400; letter-spacing: -1.3px; margin-top: 2px; }
.power span { letter-spacing: .3px; }

.alerts { height: 333px; padding: 10px 16px 0; }
.alerts h2 { margin-left: 12px; }
.thead, .row { display: grid; grid-template-columns: 171px 171px 171px; text-align: center; align-items: center; height: 64px; color: #334b35; }
.thead { margin-top: 10px; background: #d3ecd4; border-radius: 4px 4px 0 0; padding-bottom: 1px; }
.tscroll { height: 217px; overflow: hidden; display: flex; border-radius: 0 0 0 4px; }
.rows { width: 513px; }
.row:nth-child(even) { background: #fff; }
.row > span { margin-top: -1px; letter-spacing: .5px; white-space: nowrap; }
.row > span:last-child { margin-top: 0; letter-spacing: 0; }
.view { width: 132px; height: 40px; border-radius: 20px; background: #737870; color: #fff; display: flex; align-items: center; margin: 0 20px 0 19px; padding: 0 0 2px 17px; gap: 8px; }
.view svg { width: 18px; height: 18px; margin-top: 2px; }
.tbar { width: 8px; height: 197px; border-radius: 4px; background: #dfe5de; margin: 10px 0 0 4px; }

.col-right { width: 912px; }
.map { height: 416px; padding: 10px 16px 0; position: relative; }
.plan { width: 880px; height: 360px; margin-top: 10px; fill: none; }
.unit { position: absolute; width: 0; display: flex; flex-direction: column; align-items: center; gap: 4px; }
.unit svg { width: 48px; height: 24px; position: relative; z-index: 1; }
.sh svg { filter: drop-shadow(3px 3px 2px rgba(60,50,60,.4)); }
.off svg, .mh svg { fill: #fff; }
.on svg { fill: #5af56c; }
.unit b { height: 32px; padding: 5px 9.5px; border-radius: 4px; background: rgba(216,227,217,.85); font-size: 14px; font-weight: 400; line-height: 22px; color: #1a1c19; white-space: nowrap; }
.unit .hl { background: #d3ecd4; box-shadow: inset 0 0 2px 4px #d6e1d7; }
.unit p { display: flex; height: 24px; border-radius: 9px; overflow: hidden; width: 149px; flex: none; font-size: 14px; line-height: 24px; color: #4e6650; background: #fff; }
.unit p span { flex: 1; padding-left: 16px; display: flex; white-space: nowrap; }
.unit p span i { width: 6px; }
.unit em { width: 30px; text-align: center; background: #dde7df; font-size: 14px; }
.unit .short { width: 60px; }
.unit .short span { padding-left: 5px; }

.tab { height: 8px; width: 176px; margin-left: 8px; background: #faf9f5; border-radius: 12px 12px 0 0; }
.monitor { height: 338px; padding: 10px 24px 0; }
.monitor > h2 { margin-left: -8px; }
.mons { display: flex; justify-content: space-between; margin-top: 18px; }
.mon { width: 146px; }
.mh { display: flex; justify-content: space-between; align-items: center; height: 28px; color: #444842; }
.mh h2 { margin-top: -1px; }
.mh svg { width: 48px; height: 24px; }
.m2 { margin-top: 12px; }
.box { margin-top: 8px; height: 72px; border: 1px solid #707870; border-radius: 9px; overflow: hidden; }
.box h3 { height: 31px; line-height: 30px; background: #d3ecd4; }
.box p { font-size: 24px; line-height: 40px; text-align: center; letter-spacing: .5px; color: #334b35; }
.b2 { height: 70px; }
.b2 i { width: 30px; height: 30px; border-radius: 15px; margin: 4px auto; background: #d3ecd4; }
.run { width: 99px; height: 40px; margin: 4px auto 0; border-radius: 20px; background: #d3ecd4; color: #334b35; display: flex; align-items: center; padding: 0 0 1px 15px; gap: 9px; }
.run svg { width: 18px; height: 18px; margin-top: 1px; }

.trend { height: 269px; margin-top: 8px; padding: 10px 16px 0; }
.chart { margin-top: 18px; height: 205px; width: 880px; border: 1px solid #eeeeec; border-radius: 4px; background: #fff; color: #000; font-family: Inter, sans-serif; }
.chart-head { display: flex; justify-content: space-between; padding: 18px 30px 0 23px; height: 41px; }
.chart-head h3 { font-size: 15px; font-weight: 500; color: #000; letter-spacing: -.05px; }
.chart-head span { font-size: 12px; font-weight: 500; line-height: 18px; height: 18px; display: flex; align-items: center; gap: 8px; }
.chart-head span svg { width: 10px; height: 6px; }
.plot { width: 878px; height: 92px; }
.yl text { font-size: 12.5px; fill: #111; }
.xl text { font-size: 10px; fill: #111; text-anchor: middle; }
.legend { display: flex; gap: 12.5px; margin: 20px 0 0 27px; font-size: 12px; font-weight: 500; line-height: 18px; letter-spacing: .5px; }
.legend span { display: flex; align-items: center; gap: 4px; }
.legend span::before { content: ""; width: 8px; height: 8px; border-radius: 4px; background: #7b8bf9; }
.legend .k2::before { background: #df98fb; }
.legend .k3::before { background: #fda4bf; }
```
